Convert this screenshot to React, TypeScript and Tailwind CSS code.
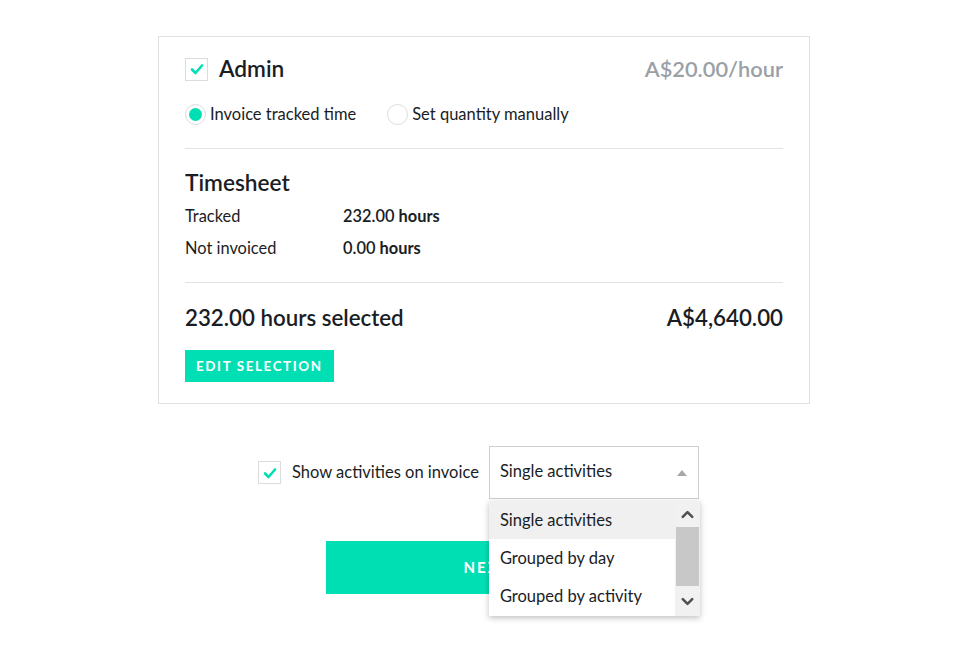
import { ChevronDown, ChevronUp } from 'lucide-react'

const font = { fontFamily: '"Source Sans Pro", Lato, "Liberation Sans", sans-serif' }

function Check({ size = 23 }: { size?: number }) {
  return (
    <span
      className="flex items-center justify-center border border-[#dcdcdc] bg-white shrink-0"
      style={{ width: size, height: size }}
    >
      <svg width="14" height="12" viewBox="0 0 14 12" fill="none">
        <path d="M2 6.5 L5.5 10 L12 2.5" stroke="#00dfb4" strokeWidth="2.6" strokeLinecap="round" strokeLinejoin="round" />
      </svg>
    </span>
  )
}

function Radio({ checked }: { checked?: boolean }) {
  return (
    <span className="flex h-[21px] w-[21px] items-center justify-center rounded-full border border-[#dcdcdc] bg-white shrink-0">
      {checked && <span className="h-[13px] w-[13px] rounded-full bg-[#00dfb4]" />}
    </span>
  )
}

export default function App() {
  return (
    <div className="min-h-[655px] bg-white pt-[36px] text-[#1a1d24]" style={font}>
      <div className="ml-[158px] w-[652px] border border-[#e1e1e1] px-[26px] pt-[19px] pb-[21px]">
        <div className="flex h-[26px] items-center justify-between">
          <div className="flex items-center gap-[11px]">
            <Check />
            <span className="text-[22.7px] font-semibold leading-[26px]">Admin</span>
          </div>
          <span className="text-[21.8px] font-semibold leading-[26px] text-[#9aa0a6]">A$20.00/hour</span>
        </div>
        <div className="mt-[21px] flex h-[22px] items-center text-[16.5px]">
          <label className="flex items-center gap-[4px]">
            <Radio checked />
            <span>Invoice tracked time</span>
          </label>
          <label className="ml-[31px] flex items-center gap-[4px]">
            <Radio />
            <span>Set quantity manually</span>
          </label>
        </div>
        <div className="mt-[23px] h-px bg-[#e3e3e3]" />
        <div className="mt-[21px] text-[22.7px] font-semibold leading-[26px]">Timesheet</div>
        <div className="mt-[9px] grid grid-cols-[158px_1fr] gap-y-[10px] text-[16.4px] leading-[22px]">
          <span>Tracked</span>
          <span className="font-semibold">232.00 <b className="font-bold">hours</b></span>
          <span>Not invoiced</span>
          <span className="font-semibold">0.00 <b className="font-bold">hours</b></span>
        </div>
        <div className="mt-[23px] h-px bg-[#e3e3e3]" />
        <div className="mt-[21px] flex h-[28px] items-center justify-between text-[22.3px] font-semibold leading-[28px]">
          <span>232.00 hours selected</span>
          <span>A$4,640.00</span>
        </div>
        <button className="mt-[18px] flex h-[32px] items-center bg-[#00dfb4] px-[11px] text-[13.4px] font-bold tracking-[1.6px] text-white">
          EDIT SELECTION
        </button>
      </div>

      <div className="relative ml-[258px] mt-[42px] flex items-center">
        <Check />
        <span className="ml-[11px] text-[16.5px]">Show activities on invoice</span>
        <div className="relative ml-[10px] flex h-[53px] w-[210px] items-center justify-between border border-[#cfcfcf] pl-[10px] pr-[10px] text-[16.5px]">
          <span className="-mt-[2px]">Single activities</span>
          <svg width="10" height="6" viewBox="0 0 10 6" className="mr-[1px]">
            <path d="M0 6 L5 0 L10 6 Z" fill="#a9a9a9" />
          </svg>
          <div className="absolute left-[-1px] top-[54px] z-10 flex h-[115px] w-[211px] bg-white shadow-[0_2px_6px_rgba(0,0,0,0.25)]">
            <div className="flex flex-1 flex-col">
              <div className="flex h-[38px] items-center bg-[#f0f0f0] pl-[11px]">Single activities</div>
              <div className="flex h-[38px] items-center pl-[11px]">Grouped by day</div>
              <div className="flex h-[38px] items-center pl-[11px]">Grouped by activity</div>
            </div>
            <div className="flex w-[25px] flex-col bg-[#f1f1f1]">
              <div className="flex h-[26px] items-center justify-center">
                <ChevronUp size={19} strokeWidth={3.2} color="#505050" />
              </div>
              <div className="mx-[1px] h-[59px] bg-[#c8c8c8]" />
              <div className="flex flex-1 items-center justify-center">
                <ChevronDown size={19} strokeWidth={3.2} color="#505050" />
              </div>
            </div>
          </div>
        </div>
      </div>

      <div className="ml-[326px] mt-[42px] flex h-[53px] w-[322px] items-center justify-center bg-[#00dfb4] text-[15px] font-bold tracking-[2px] text-white">
        NEXT
      </div>
    </div>
  )
}
